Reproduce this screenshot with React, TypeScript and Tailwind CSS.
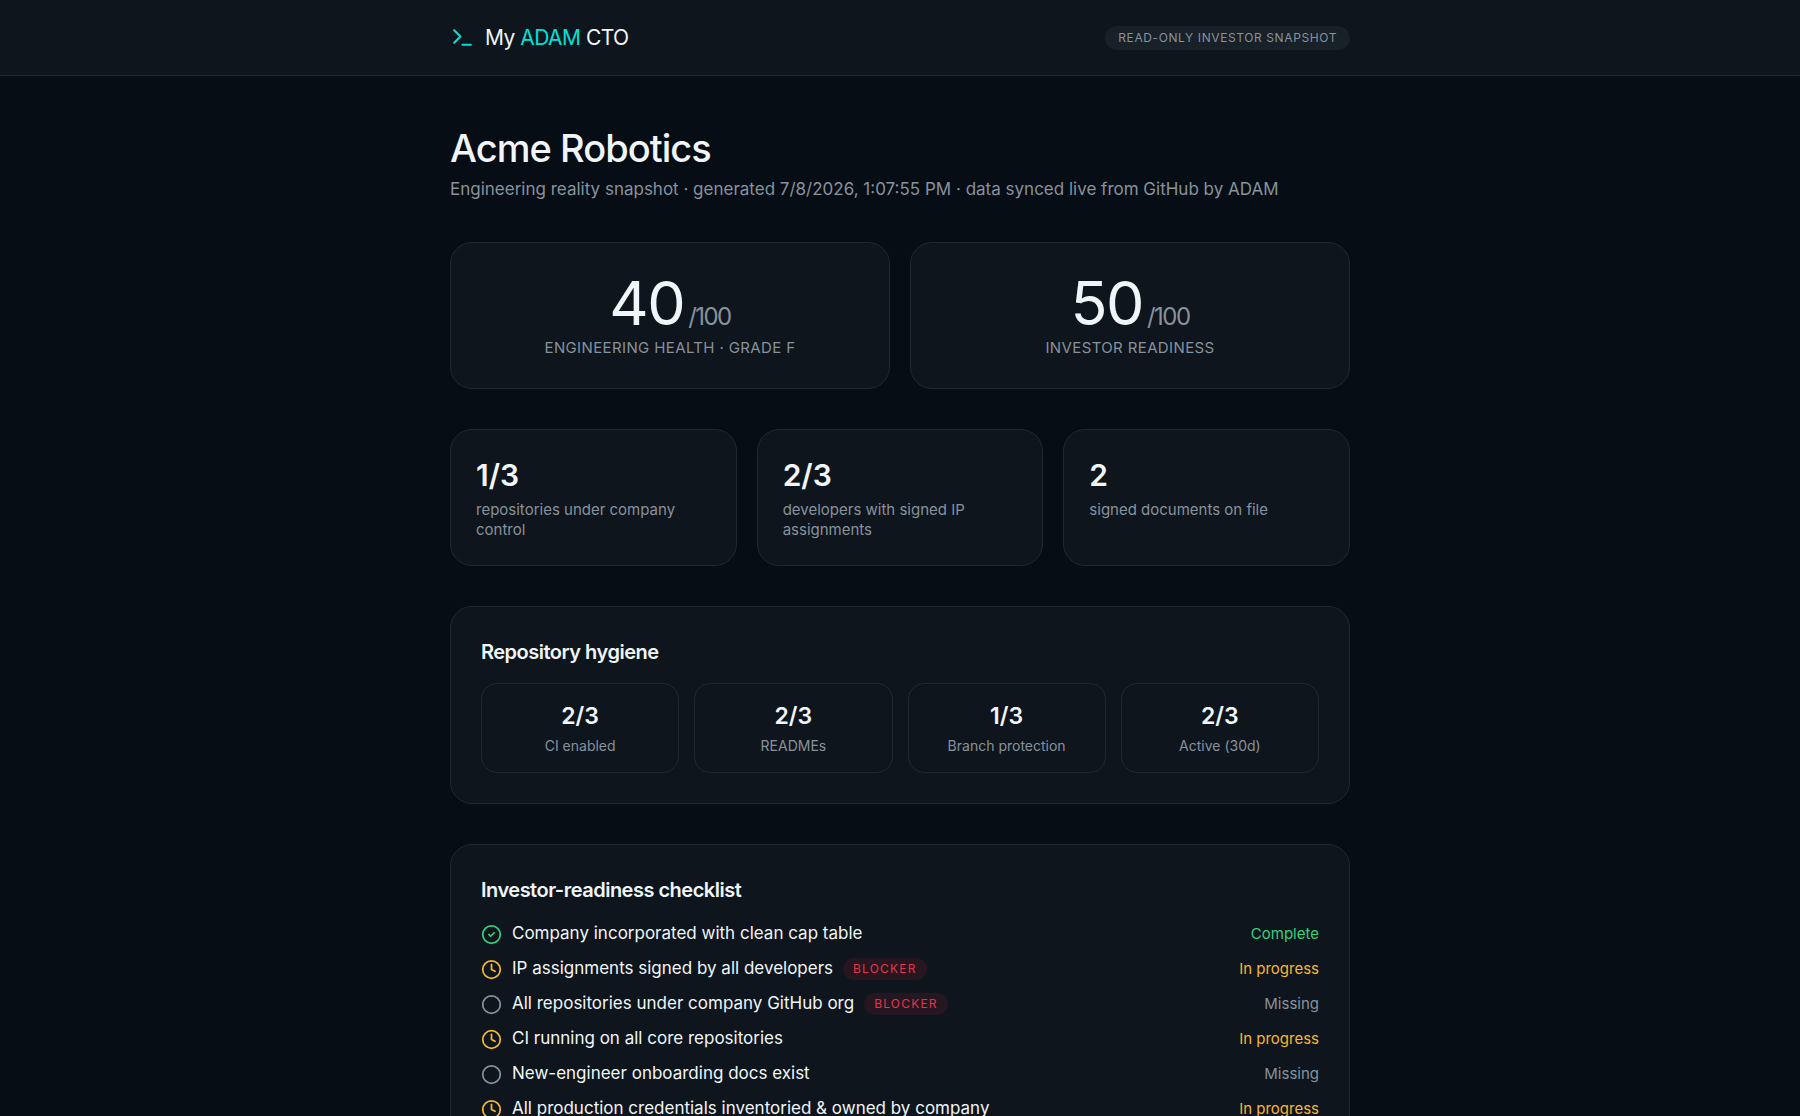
import { CheckCircle2, Circle, Clock, Terminal } from "lucide-react";
import type { ReactNode } from "react";

type Status = "complete" | "progress" | "missing";

const scores = [
  { value: 40, label: "Engineering health · Grade F" },
  { value: 50, label: "Investor readiness" },
];

const facts = [
  { value: "1/3", label: "repositories under company control" },
  { value: "2/3", label: "developers with signed IP assignments" },
  { value: "2", label: "signed documents on file" },
];

const hygiene = [
  { value: "2/3", label: "CI enabled" },
  { value: "2/3", label: "READMEs" },
  { value: "1/3", label: "Branch protection" },
  { value: "2/3", label: "Active (30d)" },
];

const checklist: { title: string; status: Status; blocker?: boolean }[] = [
  { title: "Company incorporated with clean cap table", status: "complete" },
  { title: "IP assignments signed by all developers", status: "progress", blocker: true },
  { title: "All repositories under company GitHub org", status: "missing", blocker: true },
  { title: "CI running on all core repositories", status: "progress" },
  { title: "New-engineer onboarding docs exist", status: "missing" },
  { title: "All production credentials inventoried & owned by company", status: "progress" },
];

const statusMeta = {
  complete: { label: "Complete", color: "text-[#34d17f]", Icon: CheckCircle2 },
  progress: { label: "In progress", color: "text-[#f5b82e]", Icon: Clock },
  missing: { label: "Missing", color: "text-[#88929d]", Icon: Circle },
};

function Card({ className, children }: { className: string; children: ReactNode }) {
  return (
    <div className={`rounded-[22px] border border-[#202831] bg-[#0e151c] ${className}`}>
      {children}
    </div>
  );
}

export default function App() {
  return (
    <div className="h-screen overflow-hidden bg-[#060d15] font-['Inter',sans-serif] text-[#f0f5f9]">
      <header className="border-b border-[#202831] bg-[#0e151c]">
        <div className="mx-auto flex h-[75px] max-w-[900px] items-center justify-between">
          <a href="#" className="flex items-center gap-[10px] text-[21px] tracking-tight">
            <Terminal size={25} className="text-[#00e0d8]" />
            <span>
              My <span className="text-[#00e0d8]">ADAM</span> CTO
            </span>
          </a>
          <span className="rounded-full bg-[#182028] px-[13px] text-[12px] leading-6 tracking-wider text-[#88929d] uppercase">
            Read-only investor snapshot
          </span>
        </div>
      </header>

      <main className="mx-auto max-w-[900px] pt-[47px]">
        <h1 className="text-[38px] leading-[50px] font-medium tracking-tight">Acme Robotics</h1>
        <p className="mt-1 text-[17px] leading-[25px] text-[#88929d]">
          Engineering reality snapshot · generated 7/8/2026, 1:07:55 PM · data synced live from
          GitHub by ADAM
        </p>

        <section className="mt-10 grid grid-cols-2 gap-5">
          {scores.map((s) => (
            <Card key={s.label} className="px-6 pt-7 pb-[27px] text-center">
              <p className="text-[61px] leading-[64px] tracking-tight">
                {s.value}
                <span className="ml-1 text-[24px] leading-none text-[#88929d]">/100</span>
              </p>
              <p className="text-[15px] leading-[26px] tracking-wide text-[#88929d] uppercase">
                {s.label}
              </p>
            </Card>
          ))}
        </section>

        <section className="mt-10 grid grid-cols-3 gap-5">
          {facts.map((f) => (
            <Card key={f.label} className="p-[25px]">
              <p className="text-[30px] leading-10 font-semibold">{f.value}</p>
              <p className="mt-[5px] text-[15px] leading-5 text-[#88929d]">{f.label}</p>
            </Card>
          ))}
        </section>

        <Card className="mt-10 p-[30px]">
          <h2 className="text-[20px] leading-[30px] font-semibold tracking-tight">
            Repository hygiene
          </h2>
          <div className="mt-4 grid grid-cols-4 gap-[15px]">
            {hygiene.map((h) => (
              <div
                key={h.label}
                className="rounded-2xl border border-[#202831] p-4 text-center"
              >
                <p className="text-[23px] leading-8 font-semibold">{h.value}</p>
                <p className="mt-1 text-[14px] leading-5 text-[#88929d]">{h.label}</p>
              </div>
            ))}
          </div>
        </Card>

        <Card className="mt-10 p-[30px]">
          <h2 className="text-[20px] leading-[30px] font-semibold tracking-tight">
            Investor-readiness checklist
          </h2>
          <ul className="mt-4 space-y-[9px]">
            {checklist.map(({ title, status, blocker }) => {
              const { label, color, Icon } = statusMeta[status];
              return (
                <li key={title} className="flex h-[26px] items-center gap-[10px]">
                  <Icon size={21} className={color} />
                  <span className="text-[17px]">{title}</span>
                  {blocker && (
                    <span className="rounded-full bg-[#261620] px-[10px] text-[12px] leading-[22px] tracking-widest text-[#e5344a] uppercase">
                      Blocker
                    </span>
                  )}
                  <span className={`ml-auto text-[15px] ${color}`}>{label}</span>
                </li>
              );
            })}
          </ul>
        </Card>
      </main>
    </div>
  );
}
